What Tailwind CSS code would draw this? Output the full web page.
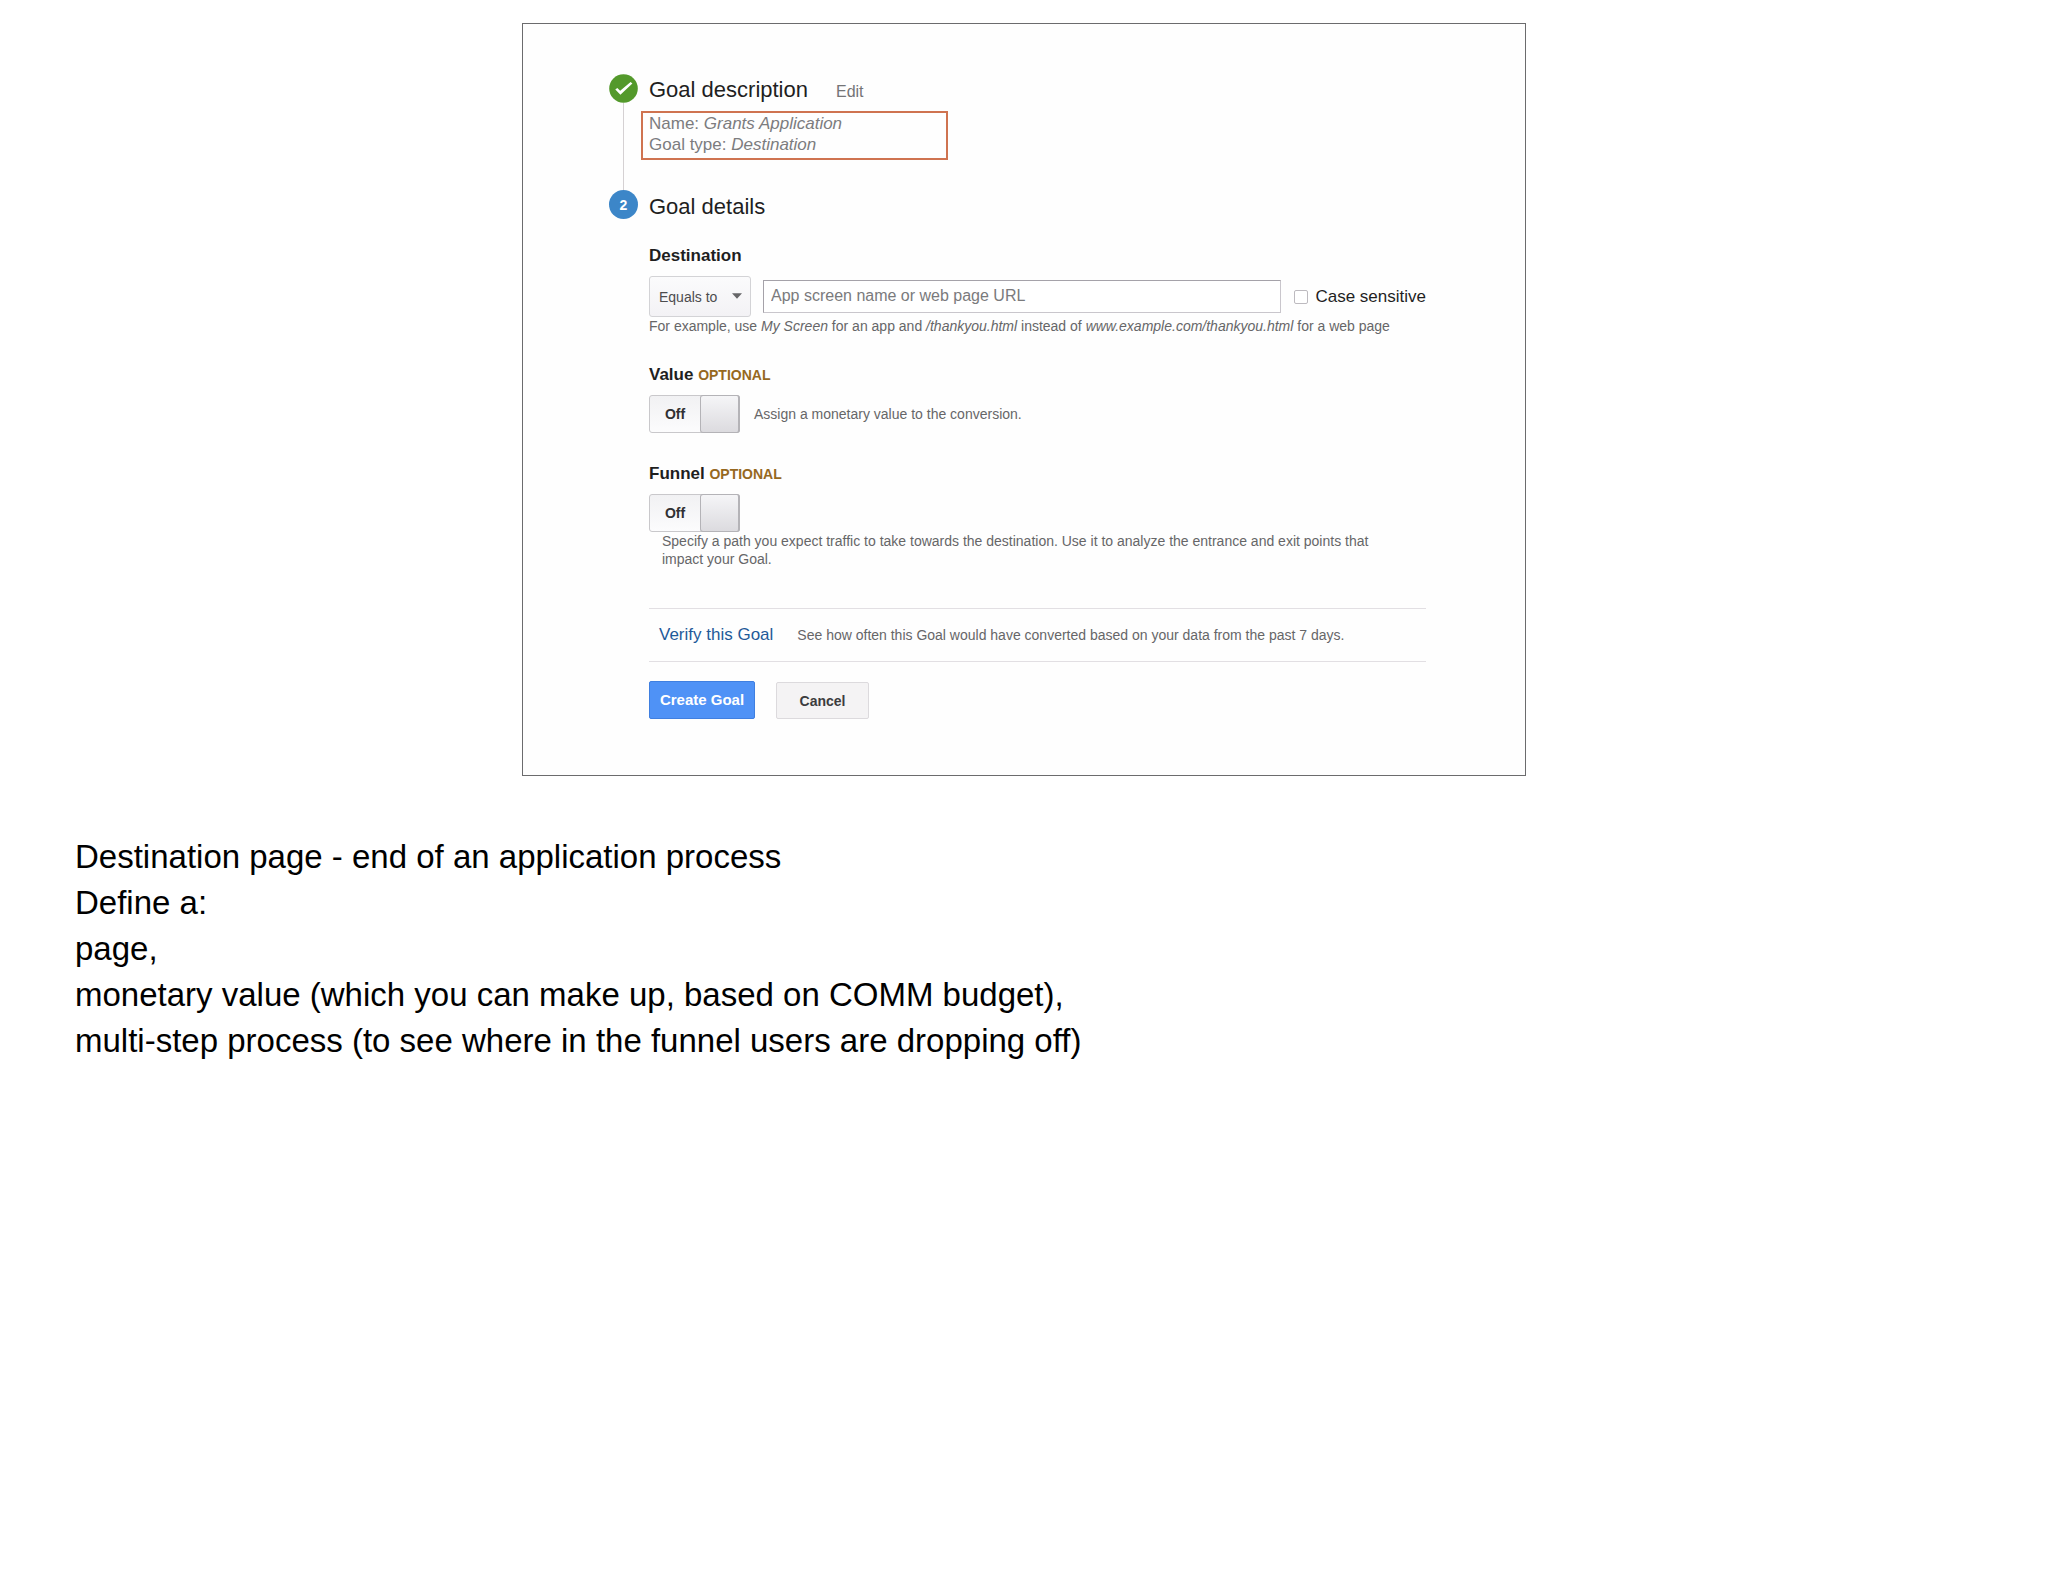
<!DOCTYPE html>
<html lang="en">
<head>
  <meta charset="utf-8">
  <meta name="viewport" content="width=device-width, initial-scale=1">
  <title>Goal setup</title>
  <script src="https://cdn.jsdelivr.net/npm/@tailwindcss/browser@4"></script>
</head>
<body class="bg-white font-['Liberation_Sans',Arial,sans-serif] text-[#1f1f1f]">
  <main class="pt-[23px]">
    <form class="mx-auto max-w-[1004px] border border-[#6b6b6d] bg-[#fefefe] pt-[50px] pb-14 pl-[86px] pr-[99px]">
      <!-- Step 1 -->
      <section class="flex gap-[11px]">
        <div class="flex flex-col items-center">
          <svg class="size-[29px]" viewBox="0 0 29 29" aria-hidden="true">
            <circle cx="14.5" cy="14.5" r="14.3" fill="#53992b"/>
            <path d="M6.3 15.6 L8.3 13.9 L11.2 16.8 L21.6 8 L23.4 9.4 L11.4 20.8 Z" fill="#fff"/>
          </svg>
          <div class="w-px grow bg-[#d5d1d3]"></div>
        </div>
        <div class="grow pb-[30px]">
          <div class="flex items-baseline gap-7">
            <h2 class="text-[22px] leading-8">Goal description</h2>
            <a href="#" class="text-base text-[#747476]">Edit</a>
          </div>
          <div class="mt-[5px] -ml-2 max-w-[307px] border-2 border-[#cf7350] pb-[3px] pl-1.5 text-[17px] leading-[21px] text-[#7c7c7e]">
            <p>Name: <i>Grants Application</i></p>
            <p>Goal type: <i>Destination</i></p>
          </div>
        </div>
      </section>

      <!-- Step 2 -->
      <section class="flex gap-[11px]">
        <div class="flex size-[29px] shrink-0 items-center justify-center rounded-full bg-[#3c86c8] text-sm font-bold text-white">2</div>
        <div class="min-w-0 grow">
          <h2 class="pt-px text-[22px] leading-8">Goal details</h2>

          <label class="mt-[23px] block text-[17px] leading-5 font-bold" for="destination">Destination</label>
          <div class="mt-2.5 flex items-center">
            <div class="relative">
              <select class="h-[41px] w-[102px] appearance-none rounded-[3px] border border-[#d3d3d6] bg-linear-to-b from-[#fbfbfc] to-[#f3f2f5] pl-[9px] text-sm text-[#4c4c4e]" aria-label="Match type">
                <option>Equals to</option>
                <option>Begins with</option>
                <option>Regular expression</option>
              </select>
              <svg class="pointer-events-none absolute top-[17px] right-[9px] h-[6px] w-[10px]" viewBox="0 0 10 6" aria-hidden="true">
                <path d="M0 0.3 H10 L5 5.7 Z" fill="#666668"/>
              </svg>
            </div>
            <input class="ml-3 h-[33px] min-w-0 grow border border-[#c9c6cc] border-t-[#a5a2a9] border-l-[#a5a2a9] bg-white pb-0.5 pl-[7px] text-base placeholder:text-[#7a7a7c]"
                   type="text" id="destination" name="destination" placeholder="App screen name or web page URL">
            <input class="ml-[13px] size-[14px] appearance-none rounded-[2px] border border-[#bdbabf] bg-white" type="checkbox" id="case">
            <label class="ml-[7px] text-[17px] leading-5" for="case">Case sensitive</label>
          </div>
          <p class="text-sm leading-[18px] text-[#666668]">For example, use <i>My Screen</i> for an app and <i>/thankyou.html</i> instead of <i>www.example.com/thankyou.html</i> for a web page</p>

          <h3 class="mt-[30px] text-[17px] leading-5 font-bold">Value <span class="text-sm text-[#96681f]">OPTIONAL</span></h3>
          <div class="mt-2.5 flex items-center gap-3.5">
            <button type="button" role="switch" aria-checked="false" aria-label="Value" class="flex h-[38px] w-[91px] rounded-[3px] border border-[#c9c8cb] bg-linear-to-b from-[#f1f1f3] to-[#fcfcfd] text-sm font-bold text-[#303032]">
              <span class="grow self-center">Off</span>
              <span class="-my-px -mr-px w-10 self-stretch rounded-[3px] border border-r-2 border-[#b4b3b7] bg-linear-to-b from-[#f5f5f7] to-[#dcdbdf]"></span>
            </button>
            <p class="text-sm leading-[18px] text-[#666668]">Assign a monetary value to the conversion.</p>
          </div>

          <h3 class="mt-[31px] text-[17px] leading-5 font-bold">Funnel <span class="text-sm text-[#96681f]">OPTIONAL</span></h3>
          <button type="button" role="switch" aria-checked="false" aria-label="Funnel" class="mt-2.5 flex h-[38px] w-[91px] rounded-[3px] border border-[#c9c8cb] bg-linear-to-b from-[#f1f1f3] to-[#fcfcfd] text-sm font-bold text-[#303032]">
            <span class="grow self-center">Off</span>
            <span class="-my-px -mr-px w-10 self-stretch rounded-[3px] border border-r-2 border-[#b4b3b7] bg-linear-to-b from-[#f5f5f7] to-[#dcdbdf]"></span>
          </button>
          <p class="px-[13px] text-sm leading-[18px] text-[#666668]">Specify a path you expect traffic to take towards the destination. Use it to analyze the entrance and exit points that impact your Goal.</p>

          <div class="mt-10 flex h-[54px] items-center gap-6 border-y border-[#e2dfe3] pl-[10px]">
            <a href="#" class="text-[17px] text-[#1f5a99]">Verify this Goal</a>
            <p class="text-sm leading-[18px] text-[#666668]">See how often this Goal would have converted based on your data from the past 7 days.</p>
          </div>

          <div class="mt-[19px] flex items-end gap-[21px]">
            <button type="submit" class="h-[38px] w-[106px] rounded-[2px] border border-[#3f7fe0] bg-[#4f92f6] text-[15px] font-bold text-white">Create Goal</button>
            <button type="button" class="h-[37px] w-[93px] rounded-[2px] border border-[#dcdadd] bg-[#f4f3f4] text-sm font-bold text-[#3c3c3e]">Cancel</button>
          </div>
        </div>
      </section>
    </form>

    <!-- Speaker notes -->
    <div class="mt-[58px] px-[75px] text-[33px] leading-[46px] text-black">
      <p>Destination page - end of an application process</p>
      <p>Define a:</p>
      <p>page,</p>
      <p>monetary value (which you can make up, based on COMM budget),</p>
      <p>multi-step process (to see where in the funnel users are dropping off)</p>
    </div>
  </main>
</body>
</html>
